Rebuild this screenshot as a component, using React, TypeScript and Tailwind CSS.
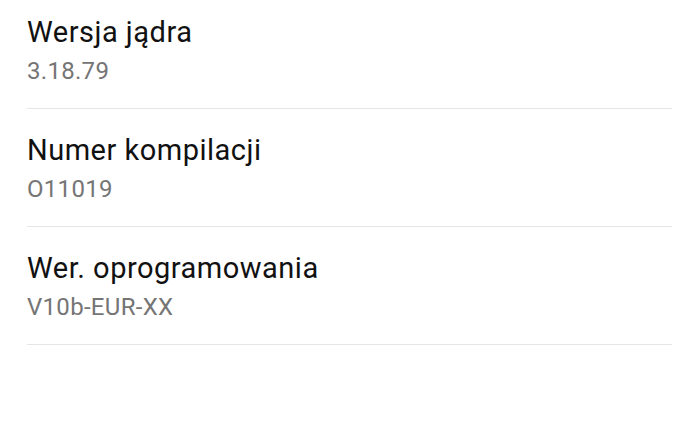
import React from "react";

const items = [
  { title: "Wersja jądra", value: "3.18.79" },
  { title: "Numer kompilacji", value: "O11019" },
  { title: "Wer. oprogramowania", value: "V10b-EUR-XX" },
];

export default function App() {
  return (
    <div className="w-[700px] h-[441px] bg-white overflow-hidden" style={{ fontFamily: "Roboto, 'Noto Sans', sans-serif" }}>
      <div className="pl-[27px] pr-[28px] -mt-[9px]">
        {items.map((it) => (
          <div key={it.title} className="h-[118px] pt-[23px] border-b border-[#e6e6e6] flex flex-col">
            <div className="text-[29px] leading-[36px] tracking-[0.5px] text-[#111111]">{it.title}</div>
            <div className="text-[24px] leading-[30px] tracking-[0.3px] text-[#757575] mt-[6px]">{it.value}</div>
          </div>
        ))}
      </div>
    </div>
  );
}
